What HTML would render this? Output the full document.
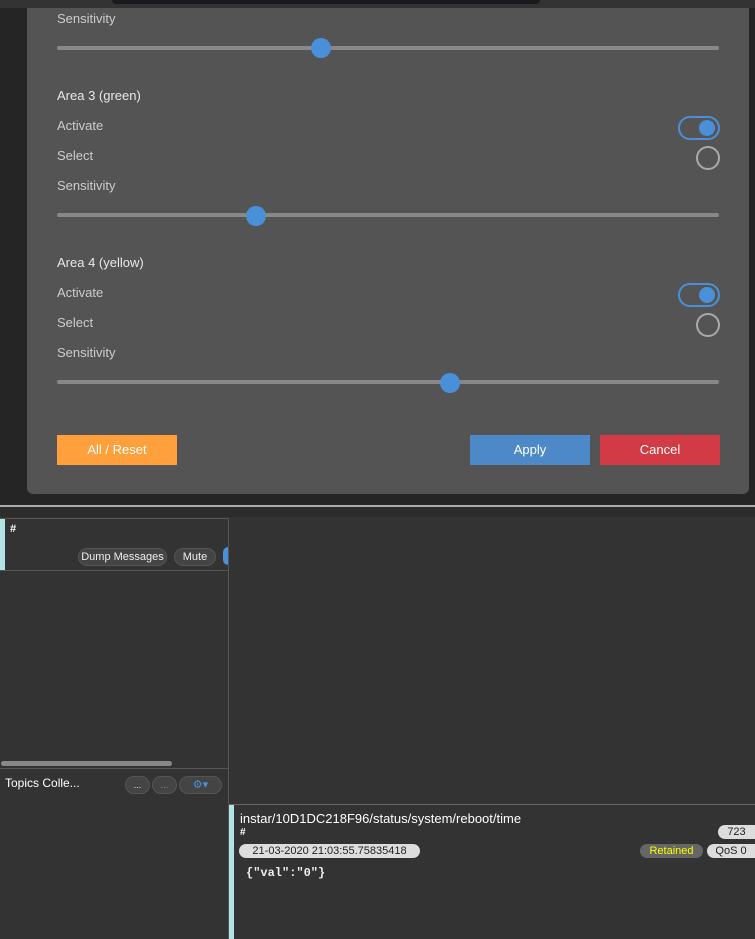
<!DOCTYPE html>
<html><head><style>
*{margin:0;padding:0;box-sizing:border-box}
body{width:755px;height:939px;background:#333;font-family:"Liberation Sans",sans-serif;position:relative;overflow:hidden;color:#ddd}
.a{position:absolute}
.top{left:0;top:0;width:755px;height:506px;background:#252525}
.modal{left:27px;top:8px;width:722px;height:486px;background:#545454;border-radius:0 0 6px 6px}
.lbl{font-size:13px;color:#ccc;left:57px}
.hd{font-size:13px;color:#e8e8e8;left:57px}
.track{left:57px;width:662px;height:4px;background:#888;border-radius:2px}
.knob{width:20px;height:20px;border-radius:50%;background:#4a90d9}
.tog{left:678px;width:42px;height:24px;border:2px solid #4a90d9;border-radius:12px}
.tog i{position:absolute;right:3px;top:2px;width:16px;height:16px;border-radius:50%;background:#4a90d9}
.rad{left:696px;width:24px;height:24px;border:2px solid #aaa;border-radius:50%}
.btn{height:30px;color:#fff;font-size:13px;text-align:center;line-height:30px}
.pill{background:#444;border:1px solid #555;border-radius:9px;font-size:11px;color:#eee;height:18px;line-height:16px;text-align:center}
.lp{background:#ddd;color:#222;border-radius:8px;font-size:11px;height:14px;line-height:14px;text-align:center}
</style></head><body>
<div class="a top"></div>
<div class="a" style="left:0;top:0;width:755px;height:8px;background:#333"></div>
<div class="a" style="left:112px;top:0;width:428px;height:4px;background:#1a1a1e;border-radius:0 0 6px 6px"></div>
<div class="a modal"></div>
<div class="a lbl" style="top:11px">Sensitivity</div>
<div class="a track" style="top:46px"></div><div class="a knob" style="left:311px;top:38px"></div>
<div class="a hd" style="top:88px">Area 3 (green)</div>
<div class="a lbl" style="top:118px">Activate</div><div class="a tog" style="top:116px"><i></i></div>
<div class="a lbl" style="top:148px">Select</div><div class="a rad" style="top:146px"></div>
<div class="a lbl" style="top:178px">Sensitivity</div>
<div class="a track" style="top:213px"></div><div class="a knob" style="left:246px;top:206px"></div>
<div class="a hd" style="top:255px">Area 4 (yellow)</div>
<div class="a lbl" style="top:285px">Activate</div><div class="a tog" style="top:283px"><i></i></div>
<div class="a lbl" style="top:315px">Select</div><div class="a rad" style="top:313px"></div>
<div class="a lbl" style="top:345px">Sensitivity</div>
<div class="a track" style="top:380px"></div><div class="a knob" style="left:440px;top:373px"></div>
<div class="a btn" style="left:57px;top:435px;width:120px;background:#ffa03c">All / Reset</div>
<div class="a btn" style="left:470px;top:435px;width:120px;background:#4d89c9">Apply</div>
<div class="a btn" style="left:600px;top:435px;width:120px;background:#d23b45">Cancel</div>
<div class="a" style="left:0;top:505px;width:755px;height:2px;background:#aaa"></div>
<div class="a" style="left:0;top:507px;width:755px;height:10px;background:#2c2c2c"></div>
<div class="a" style="left:228px;top:518px;width:1px;height:421px;background:#555"></div>
<div class="a" style="left:0;top:518px;width:228px;height:1px;background:#555"></div>
<div class="a" style="left:0;top:519px;width:5px;height:51px;background:#b2e4e4"></div>
<div class="a" style="left:10px;top:523px;font-size:11px;color:#fff;font-weight:bold">#</div>
<div class="a pill" style="left:78px;top:548px;width:89px">Dump Messages</div>
<div class="a pill" style="left:174px;top:548px;width:42px">Mute</div>
<div class="a" style="left:223px;top:547px;width:5px;height:18px;background:#4a90d9;border-radius:9px 0 0 9px"></div>
<div class="a" style="left:0;top:570px;width:228px;height:1px;background:#555"></div>
<div class="a" style="left:1px;top:761px;width:171px;height:5px;background:#888;border-radius:3px"></div>
<div class="a" style="left:0;top:768px;width:228px;height:1px;background:#555"></div>
<div class="a" style="left:5px;top:776px;font-size:12px;color:#fff">Topics Colle...</div>
<div class="a pill" style="left:125px;top:776px;width:25px;font-size:9px">...</div>
<div class="a pill" style="left:152px;top:776px;width:25px;font-size:9px;color:#888">...</div>
<div class="a pill" style="left:179px;top:776px;width:43px;color:#4a90d9">⚙▾</div>
<div class="a" style="left:229px;top:804px;width:526px;height:1px;background:#666"></div>
<div class="a" style="left:229px;top:805px;width:5px;height:134px;background:#b2e4e4"></div>
<div class="a" style="left:240px;top:811px;font-size:13px;color:#fff">instar/10D1DC218F96/status/system/reboot/time</div>
<div class="a" style="left:240px;top:827px;font-size:10px;color:#fff;font-weight:bold">#</div>
<div class="a lp" style="left:718px;top:825px;width:37px;border-radius:8px 0 0 8px">723</div>
<div class="a lp" style="left:239px;top:844px;width:181px">21-03-2020  21:03:55.75835418</div>
<div class="a lp" style="left:640px;top:844px;width:63px;background:#666;color:#ff0">Retained</div>
<div class="a lp" style="left:707px;top:844px;width:48px;border-radius:8px 0 0 8px">QoS 0</div>
<div class="a" style="left:246px;top:866px;font-family:'Liberation Mono',monospace;font-size:12px;color:#eee;font-weight:bold">{"val":"0"}</div>
</body></html>
